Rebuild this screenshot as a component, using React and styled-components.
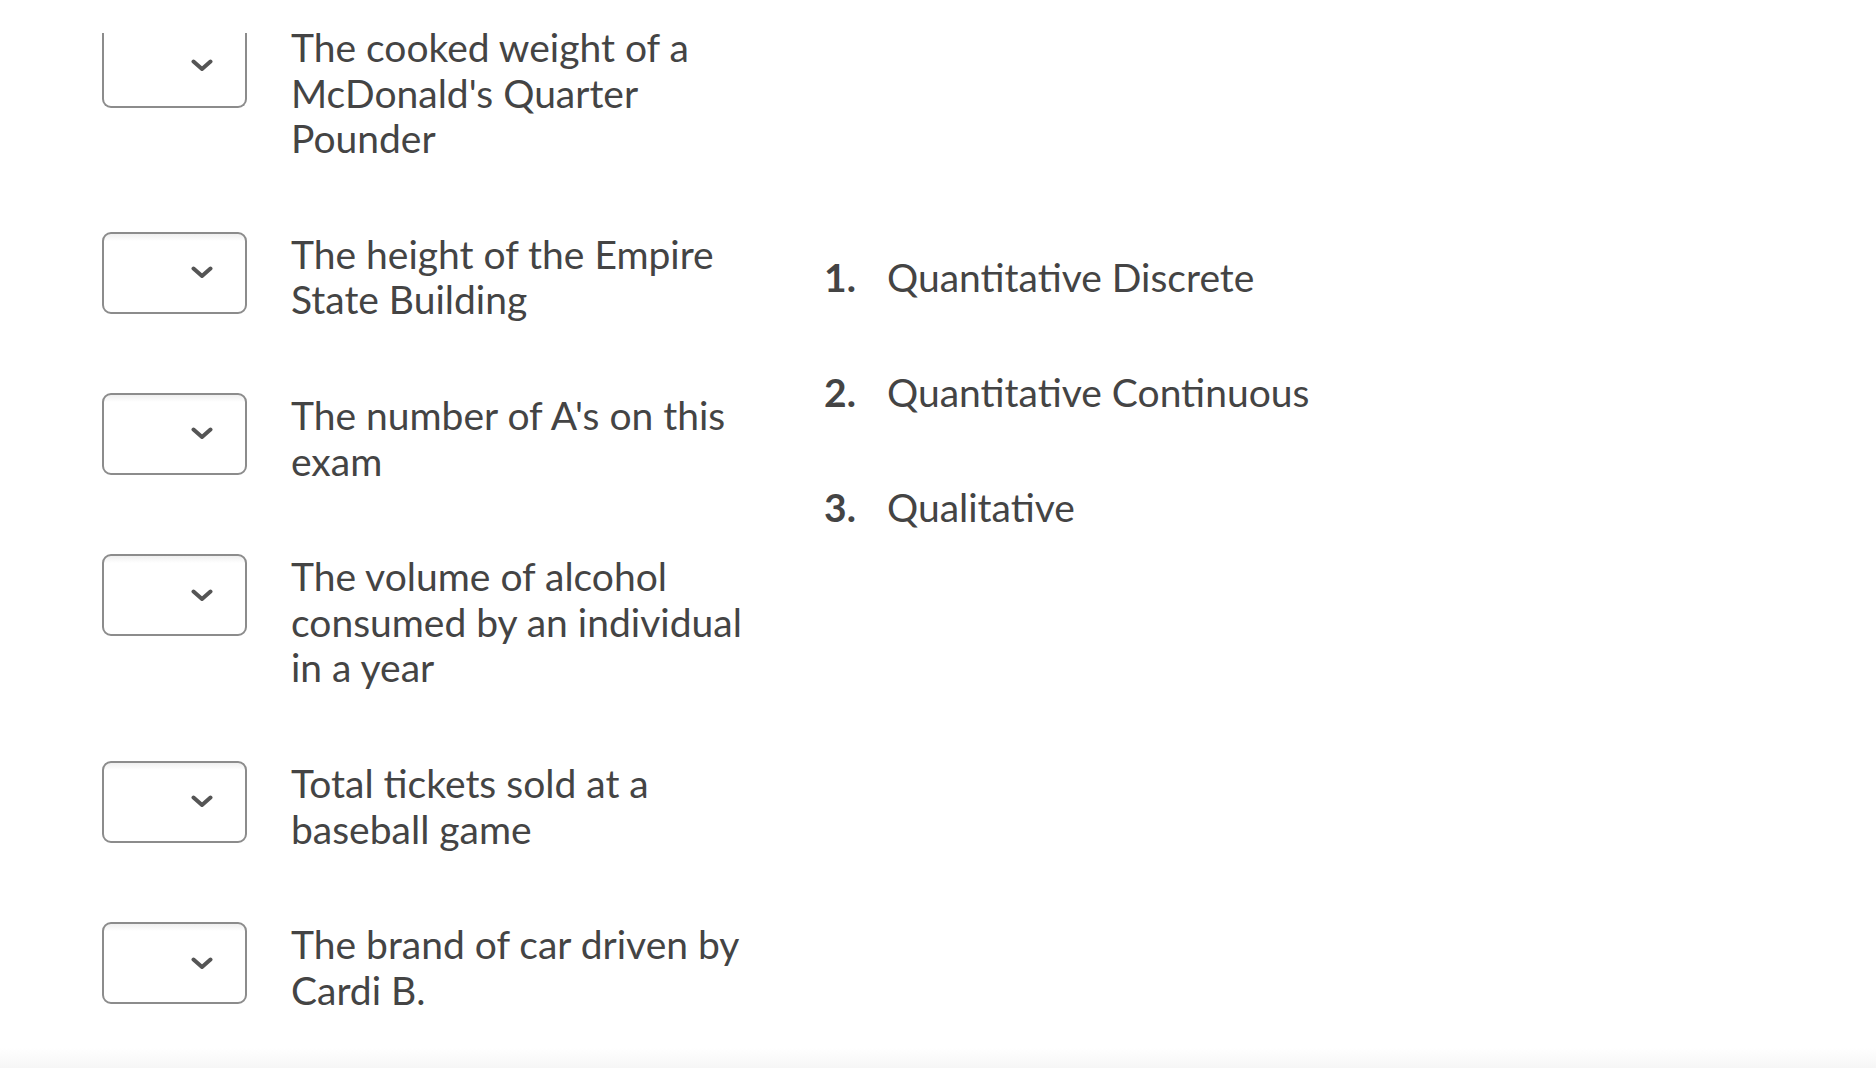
import React from "react";
import styled, { createGlobalStyle, css } from "styled-components";

const GlobalStyle = createGlobalStyle`
  html, body {
    margin: 0;
    padding: 0;
    background: #ffffff;
  }
  body {
    font-family: Lato, "Open Sans", "Liberation Sans", sans-serif;
    color: #444444;
  }
`;

const Page = styled.div`
  height: 100vh;
  display: flex;
  flex-direction: column;
  overflow: hidden;
`;

const Content = styled.div`
  flex: 1;
  padding: 25px 0 0 102px;
  display: flex;
  align-items: flex-start;
`;

const Prompts = styled.div`
  display: flex;
  flex-direction: column;
  gap: 70px;
`;

const Row = styled.div`
  display: flex;
  align-items: flex-start;
  gap: 44px;
`;

const SelectBox = styled.button`
  box-sizing: border-box;
  width: 145px;
  height: 82px;
  flex: none;
  border: 2px solid #8c8c8c;
  border-radius: 9px;
  background: linear-gradient(#efefef 0, #ffffff 7px);
  display: flex;
  align-items: center;
  justify-content: flex-end;
  padding: 0 32px 0 0;
  cursor: pointer;

  ${(p) =>
    p.$clipped &&
    css`
      height: 75px;
      margin-top: 8px;
      border-top: none;
      border-top-left-radius: 0;
      border-top-right-radius: 0;
      background: #ffffff;
      padding-top: 0;
      align-items: center;
      & > svg {
        margin-top: -8px;
      }
    `}
`;

const Chevron = styled.svg`
  width: 22px;
  height: 13px;
  display: block;
`;

const PromptText = styled.div`
  width: 455px;
  font-size: 39px;
  line-height: 45.6px;
  color: #444444;
`;

const Answers = styled.ol`
  list-style: none;
  margin: 228px 0 0 78px;
  padding: 0;
  display: flex;
  flex-direction: column;
  gap: 66px;
`;

const Answer = styled.li`
  display: flex;
  align-items: baseline;
`;

const Num = styled.span`
  width: 63px;
  flex: none;
  font-size: 39px;
  font-weight: 700;
  color: #444444;
`;

const AnswerText = styled.span`
  font-size: 39px;
  line-height: 49.2px;
  color: #444444;
`;

const Footer = styled.div`
  height: 20px;
  flex: none;
  background: linear-gradient(#ffffff, #f6f6f6);
`;

const prompts = [
  "The cooked weight of a McDonald's Quarter Pounder",
  "The height of the Empire State Building",
  "The number of A's on this exam",
  "The volume of alcohol consumed by an individual in a year",
  "Total tickets sold at a baseball game",
  "The brand of car driven by Cardi B.",
];

const answers = ["Quantitative Discrete", "Quantitative Continuous", "Qualitative"];

function Select({ clipped }) {
  return (
    <SelectBox type="button" aria-label="Select answer" $clipped={clipped}>
      <Chevron viewBox="0 0 22 13" fill="none">
        <polyline
          points="2.5,2.5 11,10 19.5,2.5"
          stroke="#555555"
          strokeWidth="4"
          strokeLinecap="round"
          strokeLinejoin="round"
        />
      </Chevron>
    </SelectBox>
  );
}

export default function App() {
  return (
    <>
      <GlobalStyle />
      <Page>
        <Content>
          <Prompts>
            {prompts.map((p, i) => (
              <Row key={p}>
                <Select clipped={i === 0} />
                <PromptText>{p}</PromptText>
              </Row>
            ))}
          </Prompts>
          <Answers>
            {answers.map((a, i) => (
              <Answer key={a}>
                <Num>{i + 1}.</Num>
                <AnswerText>{a}</AnswerText>
              </Answer>
            ))}
          </Answers>
        </Content>
        <Footer />
      </Page>
    </>
  );
}
